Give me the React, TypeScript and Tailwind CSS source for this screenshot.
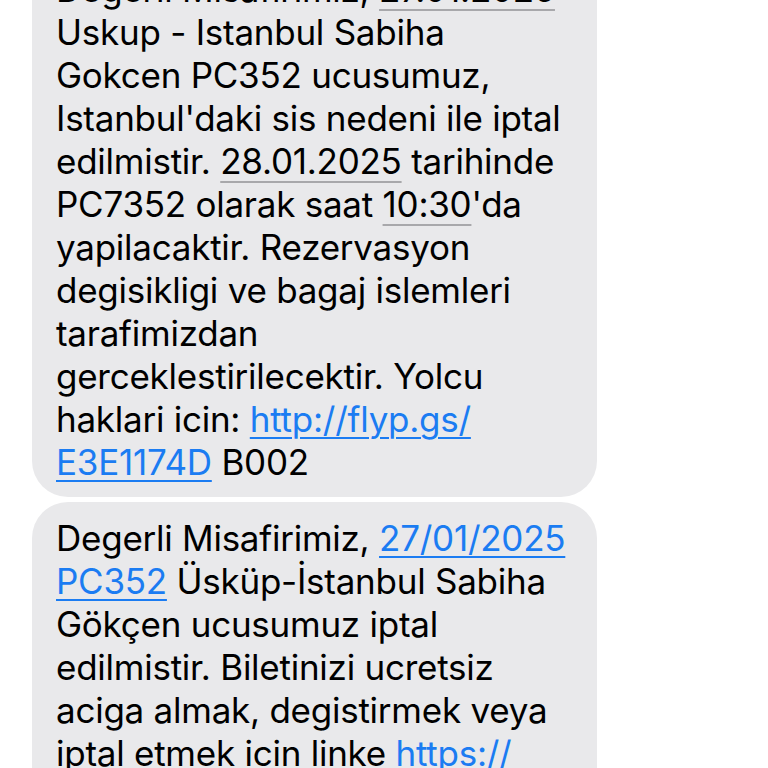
import React from "react";

const Link = ({ children }: { children: React.ReactNode }) => (
  <span className="text-[#1b7cf2] underline decoration-[2px] underline-offset-[5px]">{children}</span>
);
const Data = ({ children }: { children: React.ReactNode }) => (
  <span className="underline decoration-[#a8a8ab] decoration-[2px] underline-offset-[7px]">{children}</span>
);

const Line = ({ children }: { children: React.ReactNode }) => (
  <div className="whitespace-pre h-[43px] leading-[43px]">{children}</div>
);

export default function App() {
  return (
    <div
      className="w-[768px] h-[768px] overflow-hidden bg-white text-black"
      style={{ fontFamily: "Inter, 'Noto Sans', sans-serif" }}
    >
      <div className="-mt-[47px] flex flex-col gap-[5px] pl-[32px] text-[35px] tracking-[-0.25px]">
        <div className="w-[565px] rounded-[36px] bg-[#e9e9eb] px-[24px] pt-[15px] pb-[13px]">
          <Line>Degerli Misafirimiz, <Data>27.01.2025</Data></Line>
          <Line>Uskup - Istanbul Sabiha</Line>
          <Line>Gokcen PC352 ucusumuz,</Line>
          <Line>Istanbul'daki sis nedeni ile iptal</Line>
          <Line>edilmistir. <Data>28.01.2025</Data> tarihinde</Line>
          <Line>PC7352 olarak saat <Data>10:30</Data>'da</Line>
          <Line>yapilacaktir. Rezervasyon</Line>
          <Line>degisikligi ve bagaj islemleri</Line>
          <Line>tarafimizdan</Line>
          <Line>gerceklestirilecektir. Yolcu</Line>
          <Line>haklari icin: <Link>http://flyp.gs/</Link></Line>
          <Line><Link>E3E1174D</Link> B002</Line>
        </div>
        <div className="w-[565px] rounded-[36px] bg-[#e9e9eb] px-[24px] pt-[15px] pb-[13px]">
          <Line>Degerli Misafirimiz, <Link>27/01/2025</Link></Line>
          <Line><Link>PC352</Link> Üsküp-İstanbul Sabiha</Line>
          <Line>Gökçen ucusumuz iptal</Line>
          <Line>edilmistir. Biletinizi ucretsiz</Line>
          <Line>aciga almak, degistirmek veya</Line>
          <Line>iptal etmek icin linke <Link>https://</Link></Line>
          <Line>flyp.gs/</Line>
        </div>
      </div>
    </div>
  );
}
